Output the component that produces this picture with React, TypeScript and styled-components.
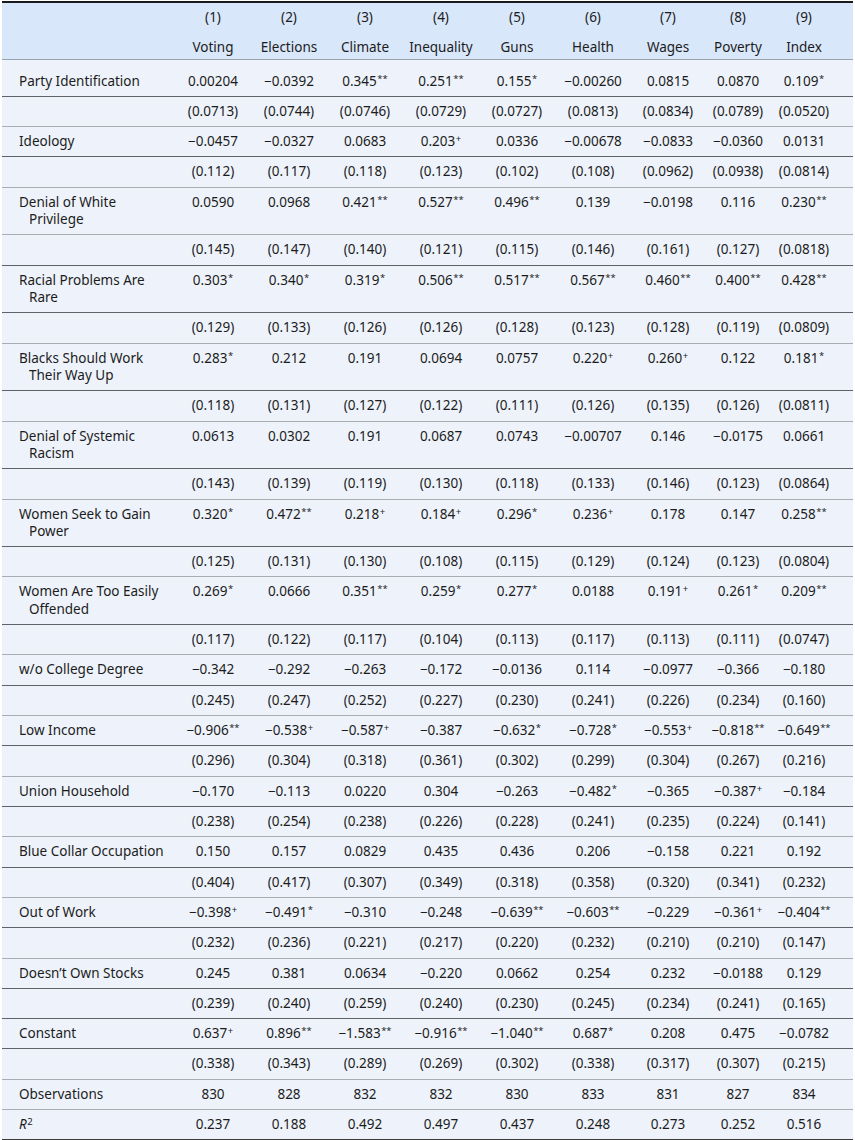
import React from "react";
import styled, { createGlobalStyle } from "styled-components";

const Global = createGlobalStyle`
  html, body { margin: 0; padding: 0; background: #ffffff; }
  body { font-family: "Noto Sans", "Open Sans", sans-serif; color: #1c1c1c; }
`;

const Wrap = styled.div`
  padding: 1px 2px 0 2px;
`;

const Table = styled.table`
  width: 851px;
  border-collapse: collapse;
  table-layout: fixed;
  font-size: 13.5px;
  border-top: 2px solid #1a1a1a;
  border-bottom: 2px solid #3a3a3a;
`;

const Head = styled.thead`
  background: #d9e7fa;
`;

const HeadCell = styled.th<{ $top?: boolean; $last?: boolean }>`
  font-weight: 400;
  text-align: center;
  line-height: 18px;
  padding: ${(p) => (p.$top ? "5px 0 5px" : "7px 0 3px")};
  padding-right: ${(p) => (p.$last ? "16px" : "0")};
  white-space: nowrap;
`;

const HeadRow = styled.tr<{ $last?: boolean }>`
  border-bottom: ${(p) => (p.$last ? "1px solid #9aa4b0" : "none")};
`;

const Body = styled.tbody`
  background: #eef3fb;
`;

const Row = styled.tr<{ $tone: "dark" | "light"; $first?: boolean }>`
  border-bottom: 1px solid ${(p) => (p.$tone === "dark" ? "#5f6266" : "#a9adb2")};
  & > td {
    padding-top: ${(p) => (p.$first ? "12.5px" : "6px")};
  }
`;

const Label = styled.td`
  padding: 6px 6px 6px 27px;
  text-indent: -10px;
  line-height: 17.32px;
  text-align: left;
  vertical-align: top;
`;

const Cell = styled.td<{ $last?: boolean }>`
  padding: 6px ${(p) => (p.$last ? "16px" : "0")} 6px 0;
  line-height: 17.32px;
  text-align: center;
  vertical-align: top;
  white-space: nowrap;
`;

const Sup = styled.sup`
  font-size: 9.5px;
  line-height: 0;
  vertical-align: 4px;
  margin-left: 0.5px;
`;

const Italic = styled.i`
  font-style: italic;
`;

type Tone = "dark" | "light";
type Entry = { label: string; coef: string[]; se: string[]; seTone?: Tone; coefTone?: Tone };

const entries: Entry[] = [
  { label: "Party Identification", coef: ["0.00204","−0.0392","0.345**","0.251**","0.155*","−0.00260","0.0815","0.0870","0.109*"], se: ["(0.0713)","(0.0744)","(0.0746)","(0.0729)","(0.0727)","(0.0813)","(0.0834)","(0.0789)","(0.0520)"] },
  { label: "Ideology", coef: ["−0.0457","−0.0327","0.0683","0.203+","0.0336","−0.00678","−0.0833","−0.0360","0.0131"], se: ["(0.112)","(0.117)","(0.118)","(0.123)","(0.102)","(0.108)","(0.0962)","(0.0938)","(0.0814)"] },
  { label: "Denial of White Privilege", coef: ["0.0590","0.0968","0.421**","0.527**","0.496**","0.139","−0.0198","0.116","0.230**"], se: ["(0.145)","(0.147)","(0.140)","(0.121)","(0.115)","(0.146)","(0.161)","(0.127)","(0.0818)"], coefTone: "light", seTone: "dark" },
  { label: "Racial Problems Are Rare", coef: ["0.303*","0.340*","0.319*","0.506**","0.517**","0.567**","0.460**","0.400**","0.428**"], se: ["(0.129)","(0.133)","(0.126)","(0.126)","(0.128)","(0.123)","(0.128)","(0.119)","(0.0809)"] },
  { label: "Blacks Should Work Their Way Up", coef: ["0.283*","0.212","0.191","0.0694","0.0757","0.220+","0.260+","0.122","0.181*"], se: ["(0.118)","(0.131)","(0.127)","(0.122)","(0.111)","(0.126)","(0.135)","(0.126)","(0.0811)"] },
  { label: "Denial of Systemic Racism", coef: ["0.0613","0.0302","0.191","0.0687","0.0743","−0.00707","0.146","−0.0175","0.0661"], se: ["(0.143)","(0.139)","(0.119)","(0.130)","(0.118)","(0.133)","(0.146)","(0.123)","(0.0864)"] },
  { label: "Women Seek to Gain Power", coef: ["0.320*","0.472**","0.218+","0.184+","0.296*","0.236+","0.178","0.147","0.258**"], se: ["(0.125)","(0.131)","(0.130)","(0.108)","(0.115)","(0.129)","(0.124)","(0.123)","(0.0804)"] },
  { label: "Women Are Too Easily Offended", coef: ["0.269*","0.0666","0.351**","0.259*","0.277*","0.0188","0.191+","0.261*","0.209**"], se: ["(0.117)","(0.122)","(0.117)","(0.104)","(0.113)","(0.117)","(0.113)","(0.111)","(0.0747)"] },
  { label: "w/o College Degree", coef: ["−0.342","−0.292","−0.263","−0.172","−0.0136","0.114","−0.0977","−0.366","−0.180"], se: ["(0.245)","(0.247)","(0.252)","(0.227)","(0.230)","(0.241)","(0.226)","(0.234)","(0.160)"] },
  { label: "Low Income", coef: ["−0.906**","−0.538+","−0.587+","−0.387","−0.632*","−0.728*","−0.553+","−0.818**","−0.649**"], se: ["(0.296)","(0.304)","(0.318)","(0.361)","(0.302)","(0.299)","(0.304)","(0.267)","(0.216)"] },
  { label: "Union Household", coef: ["−0.170","−0.113","0.0220","0.304","−0.263","−0.482*","−0.365","−0.387+","−0.184"], se: ["(0.238)","(0.254)","(0.238)","(0.226)","(0.228)","(0.241)","(0.235)","(0.224)","(0.141)"] },
  { label: "Blue Collar Occupation", coef: ["0.150","0.157","0.0829","0.435","0.436","0.206","−0.158","0.221","0.192"], se: ["(0.404)","(0.417)","(0.307)","(0.349)","(0.318)","(0.358)","(0.320)","(0.341)","(0.232)"] },
  { label: "Out of Work", coef: ["−0.398+","−0.491*","−0.310","−0.248","−0.639**","−0.603**","−0.229","−0.361+","−0.404**"], se: ["(0.232)","(0.236)","(0.221)","(0.217)","(0.220)","(0.232)","(0.210)","(0.210)","(0.147)"] },
  { label: "Doesn’t Own Stocks", coef: ["0.245","0.381","0.0634","−0.220","0.0662","0.254","0.232","−0.0188","0.129"], se: ["(0.239)","(0.240)","(0.259)","(0.240)","(0.230)","(0.245)","(0.234)","(0.241)","(0.165)"], seTone: "dark" },
  { label: "Constant", coef: ["0.637+","0.896**","−1.583**","−0.916**","−1.040**","0.687*","0.208","0.475","−0.0782"], se: ["(0.338)","(0.343)","(0.289)","(0.269)","(0.302)","(0.338)","(0.317)","(0.307)","(0.215)"] },
];

const numbers = ["(1)","(2)","(3)","(4)","(5)","(6)","(7)","(8)","(9)"];
const names = ["Voting","Elections","Climate","Inequality","Guns","Health","Wages","Poverty","Index"];
const observations = ["830","828","832","832","830","833","831","827","834"];
const rsq = ["0.237","0.188","0.492","0.497","0.437","0.248","0.273","0.252","0.516"];
const widths = [173, 76, 76, 76, 76, 76, 76, 74, 66, 82];

function Value({ v }: { v: string }) {
  const m = v.match(/^(.*?)([*+]+)$/);
  if (!m) return <>{v}</>;
  return (
    <>
      {m[1]}
      <Sup>{m[2]}</Sup>
    </>
  );
}

function Cells({ values }: { values: string[] }) {
  return (
    <>
      {values.map((v, i) => (
        <Cell key={i} $last={i === values.length - 1}>
          <Value v={v} />
        </Cell>
      ))}
    </>
  );
}

export default function App() {
  return (
    <Wrap>
      <Global />
      <Table>
        <colgroup>
          {widths.map((w, i) => (
            <col key={i} style={{ width: w }} />
          ))}
        </colgroup>
        <Head>
          <HeadRow>
            <HeadCell $top />
            {numbers.map((n, i) => (
              <HeadCell $top key={n} $last={i === 8}>
                {n}
              </HeadCell>
            ))}
          </HeadRow>
          <HeadRow $last>
            <HeadCell />
            {names.map((n, i) => (
              <HeadCell key={n} $last={i === 8}>
                {n}
              </HeadCell>
            ))}
          </HeadRow>
        </Head>
        <Body>
          {entries.map((e, idx) => (
            <React.Fragment key={e.label}>
              <Row $tone={e.coefTone ?? "dark"} $first={idx === 0}>
                <Label>{e.label}</Label>
                <Cells values={e.coef} />
              </Row>
              <Row $tone={e.seTone ?? "light"}>
                <Label />
                <Cells values={e.se} />
              </Row>
            </React.Fragment>
          ))}
          <Row $tone="light">
            <Label>Observations</Label>
            <Cells values={observations} />
          </Row>
          <Row $tone="light">
            <Label>
              <Italic>R</Italic>
              <Sup>2</Sup>
            </Label>
            <Cells values={rsq} />
          </Row>
        </Body>
      </Table>
    </Wrap>
  );
}
